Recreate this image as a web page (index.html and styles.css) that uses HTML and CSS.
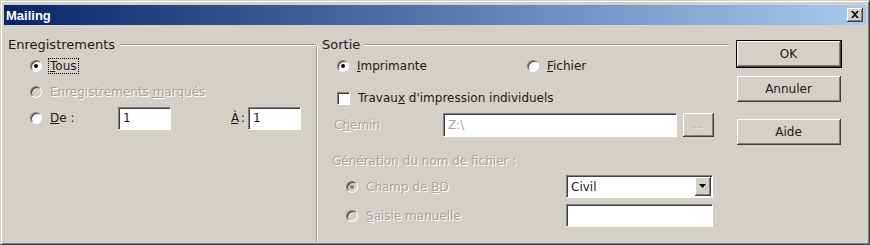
FILE: index.html
```html
<!DOCTYPE html>
<html lang="fr">
<head>
    <meta charset="UTF-8">
    <title>Mailing</title>
    <link rel="stylesheet" href="styles.css">
</head>
<body>
    <div class="window">
        <div class="titlebar">
            <span class="title">Mailing</span>
            <span class="close">
                <svg width="8" height="7" viewBox="0 0 8 7"><path d="M0 0h2l2 2 2-2h2L5 3.5 8 7H6L4 5 2 7H0l3-3.5z" fill="#000"/></svg>
            </span>
        </div>
        <div class="content">
            <div class="group group-left">
                <div class="group-title"><span>Enregistrements</span></div>
                <div class="row row-first">
                    <span class="radio checked"></span>
                    <span class="label focus"><u>T</u>ous</span>
                </div>
                <div class="row disabled">
                    <span class="radio"></span>
                    <span class="label">Enregistrements <u>m</u>arqués</span>
                </div>
                <div class="row row-range">
                    <span class="radio"></span>
                    <span class="label label-de"><u>D</u>e :</span>
                    <span class="field field-small">1</span>
                    <span class="label label-a"><u>À</u> :</span>
                    <span class="field field-small">1</span>
                </div>
            </div>

            <div class="group group-right">
                <div class="group-title"><span>Sortie</span></div>
                <div class="row row-first">
                    <span class="radio checked"></span>
                    <span class="label label-printer"><u>I</u>mprimante</span>
                    <span class="radio"></span>
                    <span class="label"><u>F</u>ichier</span>
                </div>
                <div class="row row-check">
                    <span class="checkbox"></span>
                    <span class="label">Travau<u>x</u> d'impression individuels</span>
                </div>
                <div class="row row-path disabled">
                    <span class="label label-path">C<u>h</u>emin</span>
                    <span class="field field-path">Z:\</span>
                    <span class="btn-browse">...</span>
                </div>
                <div class="subtitle disabled">Génération du nom de fichier :</div>
                <div class="row row-sub row-sub-first">
                    <div class="sub-left disabled">
                        <span class="radio checked"></span>
                        <span class="label">Champ de <u>B</u>D</span>
                    </div>
                    <div class="select">
                        <span class="select-text">Civil</span>
                        <span class="select-arrow">
                            <svg width="7" height="4" viewBox="0 0 7 4"><path d="M0 0h7L3.5 4z" fill="#000"/></svg>
                        </span>
                    </div>
                </div>
                <div class="row row-sub">
                    <div class="sub-left disabled">
                        <span class="radio"></span>
                        <span class="label"><u>S</u>aisie manuelle</span>
                    </div>
                    <span class="field field-name"></span>
                </div>
            </div>

            <div class="buttons">
                <button class="button button-default">OK</button>
                <button class="button">Annuler</button>
                <button class="button button-help">Aide</button>
            </div>
        </div>
    </div>
</body>
</html>
```

FILE: styles.css
```css
* {
    margin: 0;
    padding: 0;
    box-sizing: border-box;
}

body {
    width: 870px;
    height: 245px;
    background-color: #d4d0c8;
    font-family: 'DejaVu Sans', sans-serif;
    font-size: 12px;
    color: #1a1a1a;
    overflow: hidden;
}

.window {
    width: 870px;
    height: 245px;
    background-color: #d4d0c8;
    border-top: 1px solid #d4d0c8;
    border-left: 1px solid #d4d0c8;
    border-right: 1px solid #404040;
    border-bottom: 1px solid #404040;
    box-shadow: inset 1px 1px 0 #fff, inset -1px -1px 0 #808080;
    padding: 4px 3px 2px 3px;
    display: flex;
    flex-direction: column;
}

.titlebar {
    height: 20px;
    flex-shrink: 0;
    display: flex;
    align-items: center;
    justify-content: space-between;
    padding: 0 3px 0 2px;
    background: linear-gradient(to right, #0a246a, #a6caf0);
}

.title {
    font-family: 'Liberation Sans', sans-serif;
    font-weight: bold;
    font-size: 13px;
    color: #fff;
}

.close {
    width: 16px;
    height: 14px;
    background-color: #d4d0c8;
    border-right: 1px solid #404040;
    border-bottom: 1px solid #404040;
    box-shadow: inset 1px 1px 0 #fff, inset -1px -1px 0 #808080;
    display: flex;
    align-items: center;
    justify-content: center;
}

.content {
    flex: 1;
    display: flex;
    padding: 11px 0 0 4px;
}

.group-title {
    display: flex;
    align-items: center;
    height: 16px;
    font-size: 13px;
}

.group-title::after {
    content: "";
    flex: 1;
    margin-left: 5px;
    margin-top: 1px;
    border-top: 1px solid #a09c94;
    border-bottom: 1px solid #fff;
}

.group-left {
    width: 308px;
}

.group-right {
    width: 413px;
    padding-left: 6px;
    position: relative;
}

.group-right::before {
    content: "";
    position: absolute;
    left: 0;
    top: 10px;
    bottom: 0;
    border-left: 1px solid #a09c94;
    border-right: 1px solid #fff;
}

.row {
    display: flex;
    align-items: center;
    height: 26px;
    white-space: nowrap;
}

.group-left .row {
    padding-left: 22px;
}

.group-right .row {
    padding-left: 15px;
}

.row-first {
    margin-top: 1px;
}

.label {
    margin-left: 6px;
    padding: 0 1px;
    border: 1px solid transparent;
}

.label.focus {
    border: 1px dotted #000;
}

.disabled {
    color: #a8a49c;
    text-shadow: 1px 1px 0 #fff;
}

.radio {
    width: 12px;
    height: 12px;
    border-radius: 50%;
    background-color: #fff;
    border: 1px solid;
    border-color: #808080 #fff #fff #808080;
    box-shadow: inset 1px 1px 0 #404040;
    position: relative;
    flex-shrink: 0;
}

.radio.checked::after {
    content: "";
    position: absolute;
    left: 3px;
    top: 3px;
    width: 4px;
    height: 4px;
    border-radius: 50%;
    background-color: #000;
}

.disabled .radio {
    background-color: #d4d0c8;
}

.disabled .radio.checked::after {
    background-color: #808080;
}

.checkbox {
    width: 13px;
    height: 13px;
    background-color: #fff;
    border: 1px solid;
    border-color: #808080 #fff #fff #808080;
    box-shadow: inset 1px 1px 0 #404040;
    flex-shrink: 0;
}

.field {
    height: 23px;
    background-color: #fff;
    border: 1px solid;
    border-color: #808080 #fff #fff #808080;
    box-shadow: inset 1px 1px 0 #404040;
    display: flex;
    align-items: center;
    padding-left: 4px;
    font-size: 12px;
    color: #1a1a1a;
    text-shadow: none;
}

.label-de {
    width: 70px;
}

.field-small {
    width: 53px;
}

.label-a {
    margin-left: 58px;
    width: 19px;
    letter-spacing: -1px;
}

.label-printer {
    width: 172px;
}

.row-check {
    margin-top: 6px;
}

.group-right .row-path {
    padding-left: 10px;
    margin-top: 1px;
}

.label-path {
    margin-left: 0;
    width: 111px;
}

.field-path {
    width: 234px;
    height: 24px;
    color: #a8a49c;
    text-shadow: 1px 1px 0 #fff;
}

.btn-browse {
    width: 31px;
    height: 24px;
    margin-left: 6px;
    border-right: 1px solid #404040;
    border-bottom: 1px solid #404040;
    box-shadow: inset 1px 1px 0 #fff, inset -1px -1px 0 #808080;
    display: flex;
    align-items: center;
    justify-content: center;
    font-size: 10px;
}

.subtitle {
    padding-left: 10px;
    margin-top: 13px;
    height: 20px;
    display: flex;
    align-items: center;
}

.group-right .row-sub {
    height: 29px;
    padding-left: 24px;
}

.row-sub-first {
    margin-top: 1px;
}

.sub-left {
    display: flex;
    align-items: center;
    width: 220px;
}

.select {
    width: 147px;
    height: 23px;
    background-color: #fff;
    border: 1px solid;
    border-color: #808080 #fff #fff #808080;
    box-shadow: inset 1px 1px 0 #404040;
    display: flex;
    align-items: center;
    justify-content: space-between;
    padding: 1px 1px 1px 4px;
}

.select-arrow {
    width: 16px;
    height: 19px;
    background-color: #d4d0c8;
    border-right: 1px solid #404040;
    border-bottom: 1px solid #404040;
    box-shadow: inset 1px 1px 0 #fff, inset -1px -1px 0 #808080;
    display: flex;
    align-items: center;
    justify-content: center;
}

.field-name {
    width: 147px;
}

.buttons {
    display: flex;
    flex-direction: column;
    padding-left: 8px;
    padding-top: 5px;
}

.button {
    width: 104px;
    height: 26px;
    margin-bottom: 9px;
    font-family: 'DejaVu Sans', sans-serif;
    font-size: 12px;
    color: #1a1a1a;
    background-color: #d4d0c8;
    border: none;
    border-right: 1px solid #404040;
    border-bottom: 1px solid #404040;
    box-shadow: inset 1px 1px 0 #fff, inset -1px -1px 0 #808080;
}

.button-default {
    outline: 1px solid #000;
}

.button-help {
    margin-top: 8px;
}
```
